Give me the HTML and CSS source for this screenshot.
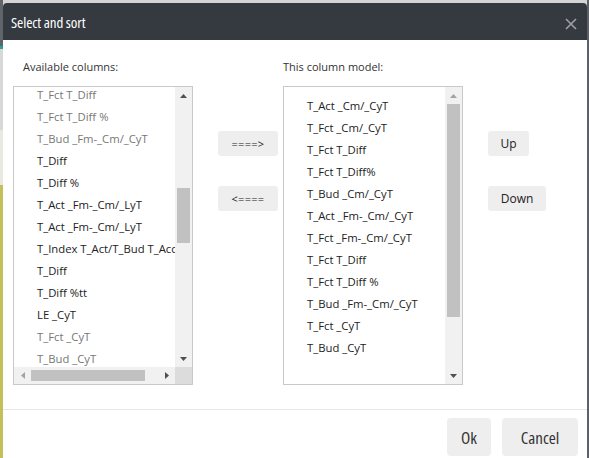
FILE: index.html
```html
<!DOCTYPE html>
<html lang="en">
<head>
    <meta charset="UTF-8">
    <title>Select and sort</title>
    <link rel="stylesheet" href="styles.css">
</head>
<body>

<div class="dialog">
    <!-- header -->
    <div class="dialog-header">
        <span class="dialog-title">Select and sort</span>
        <span class="dialog-close">
            <svg width="12" height="12" viewBox="0 0 12 12"><path d="M1 1 L11 11 M11 1 L1 11" stroke="#9da1a6" stroke-width="1.6" fill="none"/></svg>
        </span>
    </div>

    <!-- body -->
    <div class="dialog-body">
        <div class="col">
            <div class="col-label indent">Available columns:</div>
            <div class="listbox with-hbar">
                <div class="list-view">
                    <ul class="items scrolled">
                        <li class="muted">T_Fct T_Diff</li>
                        <li class="muted">T_Fct T_Diff %</li>
                        <li class="muted">T_Bud _Fm-_Cm/_CyT</li>
                        <li>T_Diff</li>
                        <li>T_Diff %</li>
                        <li>T_Act _Fm-_Cm/_LyT</li>
                        <li>T_Act _Fm-_Cm/_LyT</li>
                        <li>T_Index T_Act/T_Bud T_Acc</li>
                        <li>T_Diff</li>
                        <li>T_Diff %tt</li>
                        <li>LE _CyT</li>
                        <li class="muted">T_Fct _CyT</li>
                        <li class="muted">T_Bud _CyT</li>
                    </ul>
                </div>
                <div class="vbar">
                    <div class="arrow"><svg width="7" height="4" viewBox="0 0 7 4"><polygon points="0,4 7,4 3.5,0" fill="#505050"/></svg></div>
                    <div class="track"><div class="thumb" style="margin-top:84px;height:55px"></div></div>
                    <div class="arrow"><svg width="7" height="4" viewBox="0 0 7 4"><polygon points="0,0 7,0 3.5,4" fill="#505050"/></svg></div>
                </div>
                <div class="hbar">
                    <div class="arrow"><svg width="4" height="7" viewBox="0 0 4 7"><polygon points="4,0 4,7 0,3.5" fill="#a3a3a3"/></svg></div>
                    <div class="track"><div class="thumb" style="width:114px"></div></div>
                    <div class="arrow"><svg width="4" height="7" viewBox="0 0 4 7"><polygon points="0,0 0,7 4,3.5" fill="#505050"/></svg></div>
                </div>
                <div class="corner"></div>
            </div>
        </div>

        <div class="btn-stack move-btns">
            <button class="btn btn-small">====&gt;</button>
            <button class="btn btn-small">&lt;====</button>
        </div>

        <div class="col">
            <div class="col-label">This column model:</div>
            <div class="listbox">
                <div class="list-view">
                    <ul class="items">
                        <li>T_Act _Cm/_CyT</li>
                        <li>T_Fct _Cm/_CyT</li>
                        <li>T_Fct T_Diff</li>
                        <li>T_Fct T_Diff%</li>
                        <li>T_Bud _Cm/_CyT</li>
                        <li>T_Act _Fm-_Cm/_CyT</li>
                        <li>T_Fct _Fm-_Cm/_CyT</li>
                        <li>T_Fct T_Diff</li>
                        <li>T_Fct T_Diff %</li>
                        <li>T_Bud _Fm-_Cm/_CyT</li>
                        <li>T_Fct _CyT</li>
                        <li>T_Bud _CyT</li>
                    </ul>
                </div>
                <div class="vbar">
                    <div class="arrow"><svg width="7" height="4" viewBox="0 0 7 4"><polygon points="0,4 7,4 3.5,0" fill="#a3a3a3"/></svg></div>
                    <div class="track"><div class="thumb" style="height:213px"></div></div>
                    <div class="arrow"><svg width="7" height="4" viewBox="0 0 7 4"><polygon points="0,0 7,0 3.5,4" fill="#505050"/></svg></div>
                </div>
            </div>
        </div>

        <div class="btn-stack sort-btns">
            <button class="btn btn-up">Up</button>
            <button class="btn btn-down">Down</button>
        </div>
    </div>

    <!-- footer -->
    <div class="dialog-footer">
        <button class="btn btn-big btn-ok">Ok</button>
        <button class="btn btn-big btn-cancel">Cancel</button>
    </div>
</div>

</body>
</html>
```

FILE: styles.css
```css
html, body {
    height: 100%;
}

body {
    margin: 0;
    padding: 3px 2px 0 3px;
    box-sizing: border-box;
    overflow: hidden;
    font-family: "Open Sans", "DejaVu Sans", sans-serif;
    color: #222;
    /* the page behind the dialog */
    background:
        linear-gradient(to bottom,
            #60656b 0, #60656b 46px,
            #2e9fa0 46px, #2e9fa0 49px,
            #d8d8d8 49px, #d8d8d8 130px,
            #e9e9e0 130px, #e9e9e0 185px,
            #c4c058 185px) left top / 3px 100% no-repeat,
        linear-gradient(#5d6166, #5d6166) right top / 2px 100% no-repeat,
        #d4d4d4;
}

.dialog {
    background: #fff;
    height: 100%;
    border-radius: 4px 4px 0 0;
    display: flex;
    flex-direction: column;
}

.dialog-header {
    flex: none;
    height: 37px;
    background: #353a41;
    border-radius: 4px 4px 0 0;
    display: flex;
    align-items: center;
    justify-content: space-between;
    padding: 0 10px 0 8px;
}

.dialog-title {
    color: #fff;
    font-size: 15px;
    font-stretch: 80%;
    letter-spacing: -0.1px;
}

.dialog-close {
    display: flex;
    margin-top: 4px;
}

.dialog-body {
    flex: none;
    display: flex;
    align-items: flex-start;
    padding: 19px 0 0 10px;
    height: 370px;
    box-sizing: border-box;
    border-bottom: 1px solid #e6e6e6;
}

.col {
    width: 180px;
}

.col-label {
    font-size: 11px;
    line-height: 16px;
    color: #333;
    margin-bottom: 11px;
}

.col-label.indent {
    padding-left: 10px;
}

.listbox {
    height: 299px;
    border: 1px solid #c9c9c9;
    box-sizing: border-box;
    display: grid;
    grid-template-columns: 1fr 17px;
    grid-template-rows: 1fr;
}

.listbox.with-hbar {
    grid-template-rows: 1fr 17px;
}

.list-view {
    overflow: hidden;
}

.items {
    list-style: none;
    margin: 0;
    padding: 8px 0 0 23px;
    font-size: 11.3px;
    line-height: 22px;
    white-space: nowrap;
}

.items.scrolled {
    margin-top: -11px;
}

.items .muted {
    color: #777;
}

.vbar {
    background: #f1f1f1;
    display: flex;
    flex-direction: column;
}

.vbar .arrow {
    height: 17px;
    display: flex;
    align-items: center;
    justify-content: center;
}

.vbar .track {
    flex: 1;
}

.vbar .thumb {
    background: #c1c1c1;
    margin: 0 2px;
}

.hbar {
    background: #f1f1f1;
    display: flex;
}

.hbar .arrow {
    width: 17px;
    display: flex;
    align-items: center;
    justify-content: center;
}

.hbar .track {
    flex: 1;
    padding-top: 3px;
}

.hbar .thumb {
    background: #c1c1c1;
    height: 11px;
}

.corner {
    background: #dcdcdc;
}

.btn-stack {
    display: flex;
    flex-direction: column;
    align-items: flex-start;
    gap: 30px;
    margin-top: 72px;
}

.move-btns {
    margin-left: 25px;
    margin-right: 5px;
}

.sort-btns {
    margin-left: 25px;
}

.btn {
    font-family: "Open Sans", "DejaVu Sans", sans-serif;
    background: #eeeeee;
    border: none;
    border-radius: 3px;
    color: #222;
    padding: 0;
    cursor: pointer;
}

.btn-small {
    width: 60px;
    height: 25px;
    font-size: 11px;
    letter-spacing: 0.3px;
}

.btn-up {
    width: 41px;
    height: 25px;
    font-size: 12px;
}

.btn-down {
    width: 58px;
    height: 25px;
    font-size: 12px;
}

.dialog-footer {
    display: flex;
    justify-content: flex-end;
    gap: 11px;
    padding: 8px 9px 0 0;
}

.btn-big {
    height: 38px;
    font-size: 17px;
    font-stretch: 87.5%;
    border-radius: 4px;
    color: #333;
}

.btn-ok {
    width: 44px;
}

.btn-cancel {
    width: 76px;
}
```
